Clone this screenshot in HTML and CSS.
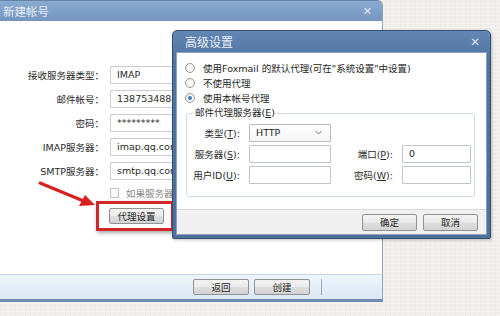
FILE: index.html
```html
<!DOCTYPE html>
<html lang="zh-CN">
<head>
<meta charset="utf-8">
<title>高级设置</title>
<link rel="stylesheet" href="styles.css">
</head>
<body>
<div class="desk">
  <div class="win">
    <div class="win-title">
      <span class="win-name">新建帐号</span>
      <span class="win-x">✕</span>
    </div>
    <div class="win-body">
      <div class="form">
        <label class="lbl">接收服务器类型：</label><div class="inp">IMAP</div>
        <label class="lbl">邮件帐号：</label><div class="inp">138753488@qq.com</div>
        <label class="lbl">密码：</label><div class="inp">*********</div>
        <label class="lbl">IMAP服务器：</label><div class="inp">imap.qq.com</div>
        <label class="lbl">SMTP服务器：</label><div class="inp">smtp.qq.com</div>
      </div>
      <div class="check-row"><span class="chk"></span><span class="chk-text">如果服务器支持，就使用SSL连接</span></div>
      <div class="proxy-row"><button class="btn proxy">代理设置</button></div>
    </div>
    <div class="win-foot">
      <button class="btn foot-btn">返回</button>
      <button class="btn foot-btn">创建</button>
      <span class="foot-sep"></span>
    </div>
  </div>

  <div class="highlight"></div>
  <svg class="arrow" width="64" height="34" viewBox="0 0 64 34">
    <line x1="4" y1="5" x2="50" y2="24" stroke="#d8201f" stroke-width="3" stroke-linecap="round"/>
    <polygon points="59,27 43,28 49,17" fill="#d8201f"/>
  </svg>

  <div class="dlg">
    <div class="dlg-title">
      <span class="dlg-name">高级设置</span>
      <span class="dlg-x">✕</span>
    </div>
    <div class="dlg-inner">
      <div class="dlg-body">
        <div class="radio-row"><span class="radio"></span>使用Foxmail 的默认代理(可在"系统设置"中设置)</div>
        <div class="radio-row"><span class="radio"></span>不使用代理</div>
        <div class="radio-row"><span class="radio on"></span>使用本帐号代理</div>
        <fieldset class="group">
          <legend>邮件代理服务器(<u>E</u>)</legend>
          <div class="grid">
            <span class="glbl">类型(<u>T</u>):</span>
            <div class="sel">HTTP<svg width="7" height="5" viewBox="0 0 7 5"><path d="M0.5 1 L3.5 4 L6.5 1" fill="none" stroke="#777" stroke-width="1"/></svg></div>
            <span></span><span></span>
            <span class="glbl">服务器(<u>S</u>):</span>
            <div class="ginp"></div>
            <span class="glbl">端口(<u>P</u>):</span>
            <div class="ginp">0</div>
            <span class="glbl">用户ID(<u>U</u>):</span>
            <div class="ginp"></div>
            <span class="glbl">密码(<u>W</u>):</span>
            <div class="ginp"></div>
          </div>
        </fieldset>
      </div>
      <div class="dlg-foot">
        <button class="btn dbtn">确定</button>
        <button class="btn dbtn">取消</button>
      </div>
    </div>
  </div>
</div>
</body>
</html>
```
FILE: styles.css
```css
* { box-sizing: border-box; }
html, body { margin: 0; padding: 0; }
body {
  font-family: "DejaVu Sans", "Noto Sans CJK SC", sans-serif;
  font-size: 9.5px;
  color: #222;
}
.desk {
  position: relative;
  width: 500px;
  height: 316px;
  overflow: hidden;
  background-color: #efeeeb;
  background-image:
    repeating-linear-gradient(0deg, rgba(255,255,255,0.35) 0 1px, transparent 1px 4px),
    repeating-linear-gradient(90deg, rgba(0,0,0,0.025) 0 1px, transparent 1px 5px);
}
/* main window */
.win {
  width: 383px;
  height: 302px;
  display: flex;
  flex-direction: column;
  background: #fff;
  border-right: 1px solid #8ea4bd;
  border-bottom: 3px solid #6e8cb1;
  border-top-right-radius: 5px;
}
.win-title {
  height: 21px;
  flex: none;
  display: flex;
  align-items: center;
  justify-content: space-between;
  padding: 0 10px 0 3px;
  background: linear-gradient(#8aaad0, #7395bf);
  border-top: 1px solid #6583aa;
  border-top-right-radius: 5px;
}
.win-name { font-size: 11.5px; color: #e6edf6; font-family: "Noto Sans CJK SC", sans-serif; }
.win-x { color: #dfe8f2; font-size: 11px; }
.win-body {
  flex: 1;
  padding-top: 42px;
  background: #fff;
}
.form {
  display: grid;
  grid-template-columns: 104px 63px;
  grid-auto-rows: 24px;
  column-gap: 6px;
  align-items: center;
}
.lbl { text-align: right; color: #2a2a2a; white-space: nowrap; }
.inp {
  height: 18px;
  line-height: 16px;
  border: 1px solid #c9cdd2;
  border-right: none;
  border-radius: 2px 0 0 2px;
  padding-left: 6px;
  color: #2a2a2a;
  background: #fff;
  white-space: nowrap;
  overflow: hidden;
}
.check-row {
  width: 172px;
  height: 20px;
  display: flex;
  align-items: center;
  padding-left: 110px;
  gap: 7px;
  overflow: hidden;
}
.chk {
  width: 9px;
  height: 10px;
  flex: none;
  border: 1px solid #c2c2c2;
  background: #fbfbfb;
}
.chk-text { color: #8a8a8a; white-space: nowrap; overflow: hidden; }
.proxy-row { padding: 5px 0 0 109px; }
.btn {
  font-family: "DejaVu Sans", "Noto Sans CJK SC", sans-serif;
  font-size: 9.5px;
  color: #1e1e1e;
  padding: 0;
  border: 1px solid #8f9192;
  border-radius: 2px;
  background: linear-gradient(#f3f3f3, #ebebeb 48%, #dedede 52%, #d2d2d2);
  display: flex;
  align-items: center;
  justify-content: center;
}
.proxy { width: 55px; height: 16px; }
.win-foot {
  height: 25px;
  flex: none;
  display: flex;
  align-items: center;
  gap: 5px;
  padding-left: 193px;
  background: linear-gradient(#eef4fb, #dbe7f4);
  border-top: 1px solid #c8d5e3;
}
.foot-btn { width: 56px; height: 16px; }
.foot-sep {
  margin-left: 6px;
  width: 1px;
  height: 16px;
  background: #9aa9ba;
}
/* red highlight + arrow (overlays) */
.highlight {
  position: absolute;
  left: 96px;
  top: 201px;
  width: 78px;
  height: 30px;
  border: 3px solid #d3262b;
  box-shadow: 1px 2px 4px rgba(0,0,0,0.35);
}
.arrow {
  position: absolute;
  left: 36px;
  top: 178px;
}
/* dialog (overlay window) */
.dlg {
  position: absolute;
  left: 172px;
  top: 30px;
  width: 319px;
  height: 209px;
  display: flex;
  flex-direction: column;
  background: linear-gradient(#6386b4, #4f72a0 30px, #4d6f9c);
  border: 1px solid #34506f;
  border-radius: 5px 5px 2px 2px;
  padding: 0 3px 3px 3px;
  box-shadow: 1px 1px 3px rgba(0,0,0,0.25);
}
.dlg-title {
  height: 21px;
  flex: none;
  display: flex;
  align-items: center;
  justify-content: space-between;
  padding: 0 7px 0 9px;
}
.dlg-name { font-size: 12px; color: #e9eff7; font-family: "Noto Sans CJK SC", sans-serif; }
.dlg-x { color: #dce6f1; font-size: 11.5px; }
.dlg-inner {
  flex: 1;
  display: flex;
  flex-direction: column;
  background: #fff;
  border: 1px solid #8aa1bd;
}
.dlg-body {
  flex: 1;
  padding: 7px 11px 0 8px;
}
.radio-row {
  height: 15px;
  display: flex;
  align-items: center;
  gap: 8px;
  white-space: nowrap;
  color: #1e1e1e;
}
.radio {
  width: 10px;
  height: 10px;
  border-radius: 50%;
  border: 1px solid #9a9a9a;
  background: radial-gradient(#ffffff, #ececec);
  flex: none;
  position: relative;
}
.radio.on::after {
  content: "";
  position: absolute;
  left: 2px;
  top: 2px;
  width: 4px;
  height: 4px;
  border-radius: 50%;
  background: #3d7fb3;
}
.group {
  margin: 2px 0 0 1px;
  padding: 0 0 11px 0;
  border: 1px solid #d3dbe2;
  border-radius: 3px;
  min-width: 0;
}
.group legend {
  margin-left: 6px;
  padding: 0 2px;
  line-height: 12px;
  color: #1e1e1e;
}
.grid {
  display: grid;
  grid-template-columns: 53px 82px 53px 69px;
  grid-auto-rows: 21px;
  column-gap: 9px;
  align-items: center;
  padding-top: 3px;
}
.glbl { text-align: right; white-space: nowrap; color: #2a2a2a; }
.ginp, .sel {
  height: 18px;
  border: 1px solid #bfc4c9;
  border-radius: 1px;
  background: #fff;
  padding-left: 6px;
  line-height: 16px;
  color: #1e1e1e;
}
.sel {
  display: flex;
  align-items: center;
  justify-content: space-between;
  padding-right: 8px;
  border-color: #b8bcc1;
  background: linear-gradient(#ffffff, #f4f4f4);
}
.dlg-foot {
  height: 25px;
  flex: none;
  display: flex;
  align-items: center;
  justify-content: flex-end;
  gap: 6px;
  padding-right: 8px;
  background: #f0f0f0;
  border-top: 1px solid #dadada;
}
.dbtn { width: 55px; height: 17px; }
```
